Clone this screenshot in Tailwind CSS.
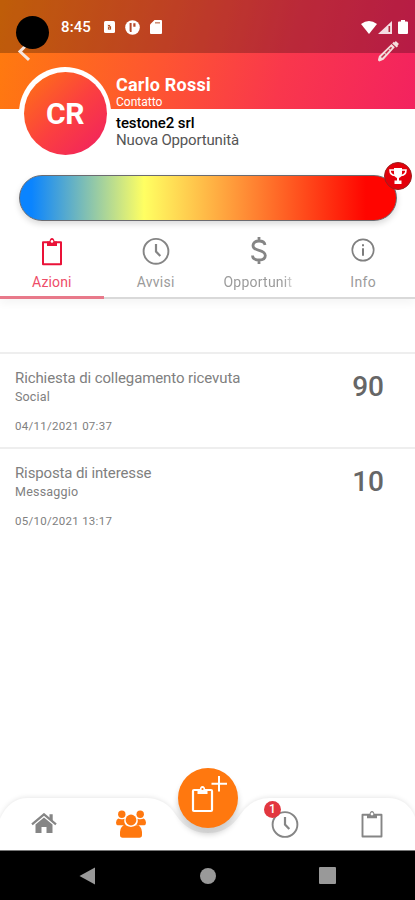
<!DOCTYPE html>
<html lang="it">
<head>
    <meta charset="UTF-8">
    <meta name="viewport" content="width=device-width, initial-scale=1.0">
    <title>Carlo Rossi - Contatto</title>
    <script src="https://cdn.jsdelivr.net/npm/@tailwindcss/browser@4"></script>
</head>
<body class="bg-white font-[Roboto,sans-serif]">

    <div class="relative flex flex-col w-[415px] h-[900px] overflow-hidden bg-white">

        <!-- Header -->
        <header class="relative h-[109px] shrink-0 bg-[linear-gradient(105deg,#ff7d0c_0%,#fe5531_40%,#f9374c_68%,#f3225f_100%)]">
            <!-- Status bar -->
            <div class="flex items-center h-[53px] bg-black/25 pt-[1px] pl-[61px] pr-[7px] text-white">
                <span class="text-[15px] font-medium leading-none w-[43px] tracking-[0.1px]">8:45</span>
                <svg class="w-[11px] h-[12px]" viewBox="0 0 11 12"><rect width="11" height="12" rx="1.5" fill="#fff"/><path d="M3.500 9V3.500h3V5h1v4zM4.800 5v1.200M5 7.200h1" fill="#b05020" stroke="#fff" stroke-width=".8"/></svg>
                <svg class="w-[15px] h-[15px] ml-[10px]" viewBox="0 0 15 15"><circle cx="7.5" cy="7.5" r="7.3" fill="#fff"/><path d="M4.600 3h2v9h-1.500l-.5-1zM8.300 3.200h2.200v3.500H8.300z" fill="#b5482a"/></svg>
                <svg class="w-[12px] h-[14px] ml-[10px]" viewBox="0 0 12 14"><path d="M4.500 0H11q1 0 1 1v12q0 1-1 1H1q-1 0-1-1V4.500z" fill="#fff"/><path d="M5 2.800h5" stroke="#c98a70" stroke-width="1.500"/></svg>
                <svg class="w-[16px] h-[13px] ml-auto" viewBox="0 0 16 13"><path d="M0 3Q8-3 16 3L8 13z" fill="#fff"/></svg>
                <svg class="w-[14px] h-[13px] ml-[1px]" viewBox="0 0 14 13"><path d="M14 0v13H0z" fill="#fff" fill-opacity=".85"/><path d="M11.300 5v6" stroke="#b52a3c" stroke-width="1.600"/></svg>
                <svg class="w-[10px] h-[14px] ml-[6px]" viewBox="0 0 10 14"><path d="M3 0h4v1.500h2q1 0 1 1V13q0 1-1 1H1q-1 0-1-1V2.500q0-1 1-1h2z" fill="#fff"/></svg>
            </div>

            <!-- Back and edit -->
            <svg class="absolute left-[17px] top-[43px] w-[14px] h-[19px]" viewBox="0 0 14 19"><path d="M9.500 2L3 8.500l9 8.300" fill="none" stroke="#f6e6df" stroke-width="3"/></svg>
            <svg class="absolute left-[377px] top-[39px] w-[24px] h-[24px]" viewBox="0 0 24 24"><path d="M2.300 22.500q-1.500-.5-1.300-2l1-3.500L14.500 5l3.300 3.300L6.500 20.700zM15.200 4.400l1.600-1.700.8.800 1.200-1.600 3.200 3.200-1.300 1.200.2 1-1.200 1.200z" fill="#f4dedd"/><path d="M4.500 18.500L14.500 8.300" stroke="#c42f4a" stroke-width="1.500" stroke-dasharray="5 .8"/></svg>
            <!-- Camera hole -->
            <div class="absolute left-[16px] top-[16px] size-[33px] rounded-full bg-black"></div>
        </header>

        <!-- Contact -->
        <section class="relative flex -mt-[42px] h-[108px] shrink-0 pl-[19px]">
            <div class="flex size-[92px] shrink-0 rounded-full bg-white p-[4.500px] pt-[5px] pb-[4px]">
                <div class="flex flex-1 items-center justify-center rounded-full bg-[linear-gradient(135deg,#ff7612_0%,#fb3f40_52%,#f01f62_100%)] text-[30px] font-bold text-white tracking-[-0.3px]">CR</div>
            </div>
            <div class="ml-[5px] pt-[7px]">
                <h1 class="h-[21px] text-[18px] leading-[22px] font-bold text-white tracking-[0.23px]">Carlo Rossi</h1>
                <p class="h-[19px] text-[12px] leading-[14px] text-white">Contatto</p>
                <p class="h-[17px] text-[15px] leading-[18px] font-medium text-black tracking-[-0.1px]">testone2 srl</p>
                <p class="text-[15px] leading-[19px] text-[#555] tracking-[-0.17px]">Nuova Opportunità</p>
            </div>
        </section>

        <!-- Score bar -->
        <section class="relative mx-[19px] w-[378px] h-[46px] shrink-0 rounded-full border border-[#6b6b70] bg-[linear-gradient(90deg,#0a84ff_3%,#ffff62_33%,#ff0500_92%)] shadow-[0_3px_6px_rgba(0,0,0,0.15)]">
            <div class="absolute left-[364px] -top-[14px] flex items-center justify-center size-[28px] rounded-full border border-[#9b2020] bg-[#e3000b]">
                <svg class="w-[18px] h-[17px]" viewBox="0 0 18 17"><path d="M5 0h8v5q0 4-3 5v2.500h2.500V16h-7v-3.500H8V10Q5 9 5 5z" fill="#fff"/><path d="M5 2H1q0 5 5 5.500M13 2h4q0 5-5 5.500" fill="none" stroke="#fff" stroke-width="1.600"/></svg>
            </div>
        </section>

        <!-- Tabs -->
        <nav class="grid grid-cols-4 h-[78px] shrink-0 border-b-2 border-[#d9d9d9] text-center text-[14px] leading-[18px] text-[#9b9b9b] shadow-[0_5px_8px_rgba(0,0,0,0.04)]">
            <div class="flex flex-col items-center pt-[16px] h-[78px] border-b-[3px] border-[#e8798a] text-[#ee4c68]">
                <svg class="w-[22px] h-[29px] mb-[7px]" viewBox="0 0 22 29"><path d="M2 5.300h18v22H2z" fill="none" stroke="#ea1238" stroke-width="2" stroke-linejoin="round"/><path d="M6 9V4.500h2.500Q8.800 1 11 1t2.500 3.500H16V9z" fill="#ea1238"/><circle cx="11" cy="4.400" r="1.300" fill="#fff"/></svg>
                <span class="tracking-[0.15px]">Azioni</span>
            </div>
            <div class="flex flex-col items-center pt-[16px]">
                <svg class="w-[28px] h-[28px] mb-[8px]" viewBox="0 0 28 28" fill="none" stroke="#858585"><circle cx="14" cy="14.300" r="12.400" stroke-width="1.900"/><path d="M14 7v7.500l4.300 4.500" stroke-width="2.200"/></svg>
                <span class="tracking-[0.25px]">Avvisi</span>
            </div>
            <div class="flex flex-col items-center pt-[15px]">
                <svg class="w-[18px] h-[29px] mb-[8px]" viewBox="0 0 18 29"><path d="M15 9Q14.500 5 9 5T3 9.500Q3 13 9 14.300T15.300 19.500Q15.300 24 9 24T2.500 19.500M9 1v4M9 24v4" fill="none" stroke="#858585" stroke-width="2.800"/></svg>
                <span class="-ml-[3px] tracking-[0.25px] [mask-image:linear-gradient(90deg,#000_88%,rgba(0,0,0,0.4))]">Opportunit</span>
            </div>
            <div class="flex flex-col items-center pt-[17px]">
                <svg class="w-[24px] h-[24px] mb-[11px]" viewBox="0 0 24 24"><circle cx="12" cy="12" r="10.700" fill="none" stroke="#808080" stroke-width="1.700"/><path d="M12 10.300v7.500M12 6.300v2" stroke="#777" stroke-width="1.900"/></svg>
                <span class="tracking-[0.3px]">Info</span>
            </div>
        </nav>

        <!-- Actions list -->
        <main class="flex-1 pt-[53px]">
            <div class="flex justify-between h-[95px] border-t-2 border-[#eeeeee] pl-[15px] pr-[31px] pt-[16px] text-[#808080]">
                <div class="-mt-px">
                    <h2 class="text-[15px] leading-[19px] tracking-[-0.1px]">Richiesta di collegamento ricevuta</h2>
                    <p class="text-[12.500px] leading-[18px] tracking-[0.15px]">Social</p>
                    <p class="mt-[12px] text-[11.500px] leading-[16px] tracking-[0.28px]">04/11/2021 07:37</p>
                </div>
                <span class="text-[28px] leading-[33px] font-medium text-[#666]">90</span>
            </div>
            <div class="flex justify-between h-[95px] border-t-2 border-[#eeeeee] pl-[15px] pr-[31px] pt-[16px] text-[#808080]">
                <div class="-mt-px">
                    <h2 class="text-[15px] leading-[19px] tracking-[-0.13px]">Risposta di interesse</h2>
                    <p class="text-[12.500px] leading-[18px] tracking-[0.22px]">Messaggio</p>
                    <p class="mt-[12px] text-[11.500px] leading-[16px] tracking-[0.28px]">05/10/2021 13:17</p>
                </div>
                <span class="text-[28px] leading-[34px] font-medium text-[#666]">10</span>
            </div>
        </main>

        <!-- Bottom bar -->
        <footer class="relative h-[53px] shrink-0">
            <svg class="absolute left-0 -top-[10px] w-[415px] h-[63px]" viewBox="0 0 415 63"><path d="M0 63V32Q9 11 28 11H146Q165 11 176 28Q188 46 208 46T240 28Q251 11 270 11H388Q407 11 415 30V63z" fill="#fff" class="drop-shadow-[0_-1px_2px_rgba(0,0,0,0.09)]"/></svg>
            <div class="relative grid grid-cols-[88px_86px_68px_86px_87px] h-[53px] items-center justify-items-center">
                <svg class="w-[26px] h-[21px]" viewBox="0 0 26 21"><path d="M1 11.300L13 1.300l12 10" fill="none" stroke="#858585" stroke-width="2.200"/><path d="M18.500 1.200h3.200v7l-3.200-2.700zM4.500 11.500L13 4.500l8.500 7V20h-6v-6h-5v6h-6z" fill="#858585"/></svg>
                <svg class="w-[30px] h-[28px]" viewBox="0 0 30 28" fill="#ff780f"><circle cx="5.800" cy="4.300" r="3.700"/><circle cx="24.200" cy="4.300" r="3.700"/><circle cx="15" cy="10" r="5.400"/><path d="M2.200 8.500Q5 10 8.500 8.800Q7.500 12.500 10 15.200H1.500Q0 15 0 12.500Q.3 9.500 2.200 8.500zM27.800 8.500Q25 10 21.500 8.800Q22.500 12.500 20 15.200h8.500Q30 15 30 12.500Q29.700 9.500 27.800 8.500zM9 14.800Q15 19 21 14.800Q25.800 16.500 26 22v3q0 2.700-2.700 2.700H6.700Q4 27.700 4 25v-3Q4.200 16.500 9 14.800z"/></svg>
                <span></span>
                <div class="relative size-[28px]">
                    <svg class="size-[28px]" viewBox="0 0 28 28" fill="none" stroke="#858585"><circle cx="14" cy="14.500" r="12.400" stroke-width="1.900"/><path d="M14 7v7.500l4.300 4.500" stroke-width="2.200"/></svg>
                    <span class="absolute -left-[7px] -top-[9px] flex items-center justify-center size-[17px] rounded-full bg-[#e2373f] text-[12px] font-medium text-white">1</span>
                </div>
                <svg class="w-[22px] h-[28px]" viewBox="0 0 22 28"><path d="M1.500 4.800h19v21.700h-19z" fill="none" stroke="#858585" stroke-width="1.900" stroke-linejoin="round"/><path d="M6 8.300V4.500h2.500Q8.800 1 11 1t2.500 3.500H16v3.800z" fill="#858585"/><circle cx="11" cy="4" r="1.400" fill="#fff"/></svg>
            </div>
            <!-- Add action -->
            <div class="absolute left-[178px] -top-[29px] size-[60px] rounded-full bg-[#ff780f] shadow-[0_6px_6px_rgba(0,0,0,0.2)]">
                <svg class="size-[60px]" viewBox="0 0 60 60"><rect x="15" y="22" width="19" height="21" rx="1" fill="none" stroke="#fff" stroke-width="2.200"/><path d="M19.500 26v-4h2.200q.3-4 2.800-4t2.800 4h2.200v4z" fill="#fff"/><circle cx="24.500" cy="21" r="1.100" fill="#ff780f"/><path d="M41 8v15.500M33.500 15.700h15.500" stroke="#fff" stroke-width="2"/></svg>
            </div>
        </footer>

        <!-- System navigation -->
        <div class="relative flex items-center h-[50px] shrink-0 bg-black border-t border-[#777] pl-[79px] pr-[79px] justify-between">
            <svg class="w-[17px] h-[18px]" viewBox="0 0 17 18"><path d="M16 .5v17L.5 9z" fill="#999"/></svg>
            <div class="size-[16px] rounded-full bg-[#999]"></div>
            <div class="size-[17px] rounded-[1px] bg-[#999]"></div>
        </div>
    </div>

</body>
</html>
